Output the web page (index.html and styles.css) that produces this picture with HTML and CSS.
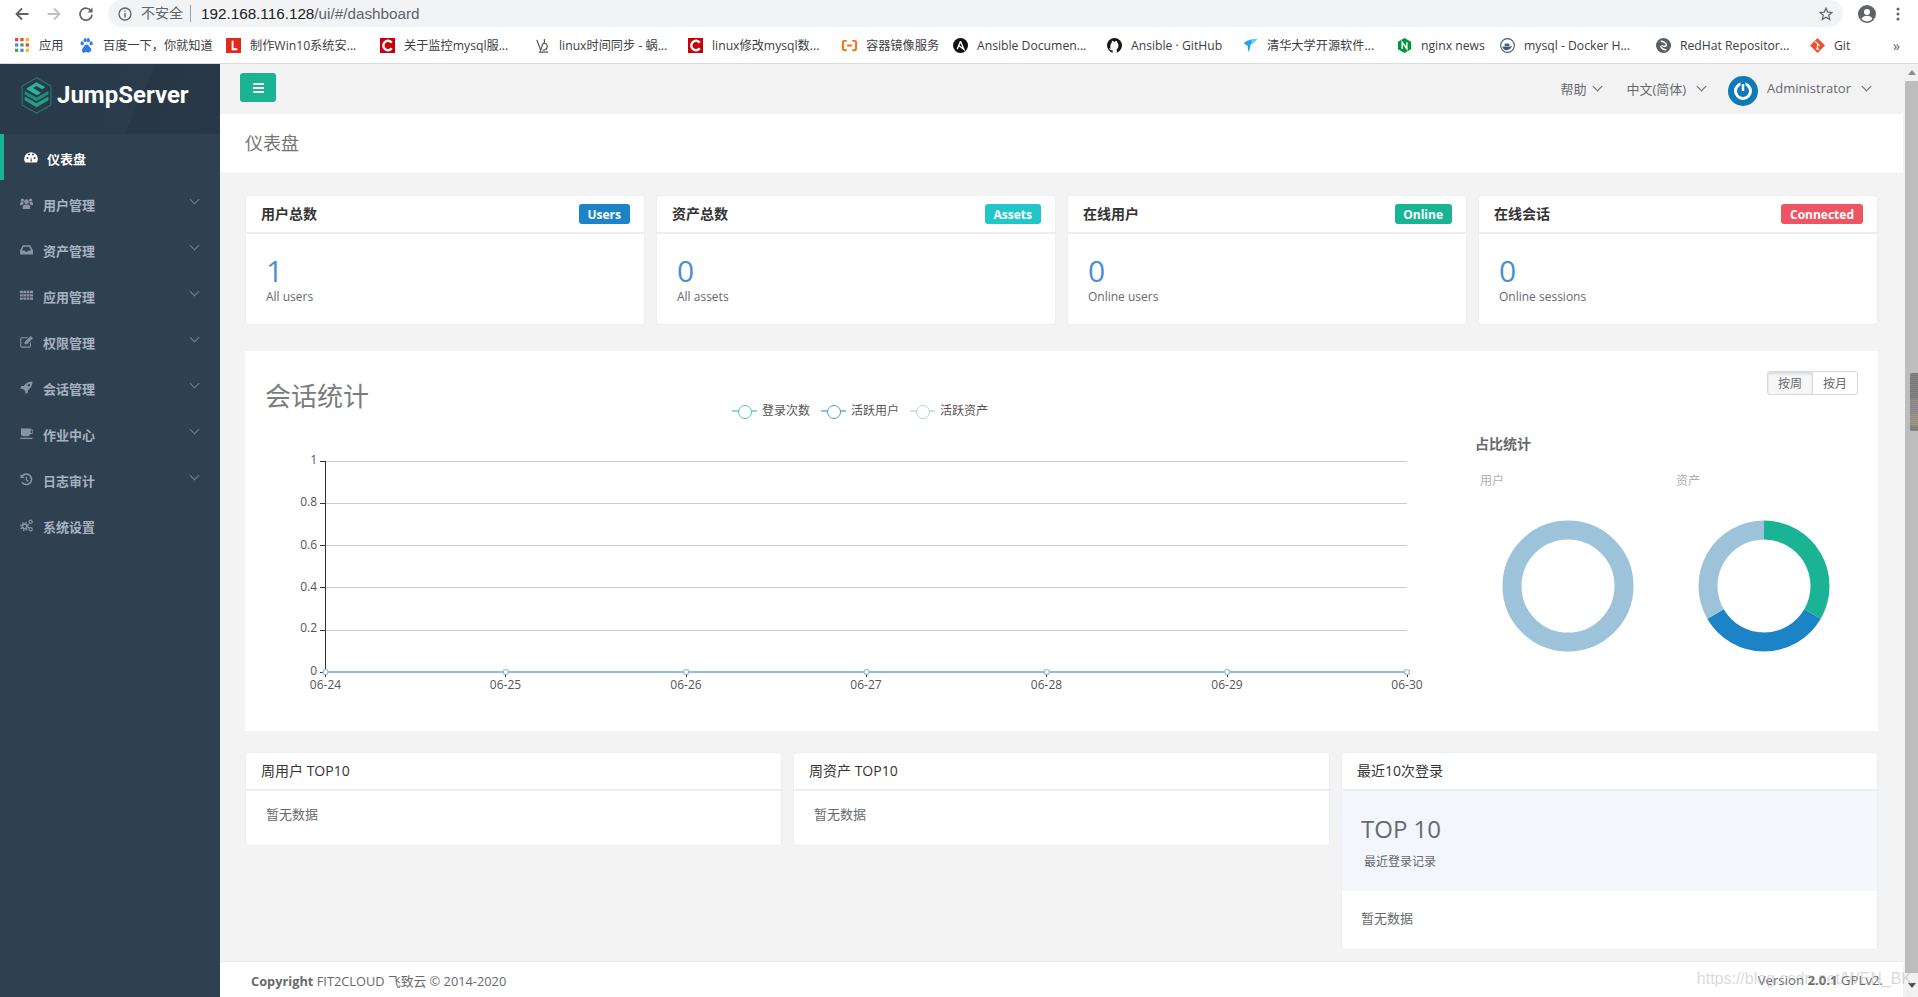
FILE: index.html
```html
<!DOCTYPE html>
<html>
<head>
    <title>JumpServer</title>
    <link rel="stylesheet" href="styles.css">
</head>
<body>
    <div class="browser-bar">
        <svg class="nav-icon" viewBox="0 0 16 16"><path d="M14.5 8H2.5M8 2.5L2.5 8 8 13.5" fill="none" stroke="#5f6368" stroke-width="1.8"/></svg>
        <svg class="nav-icon" viewBox="0 0 16 16"><path d="M1.5 8h12M8 2.5L13.5 8 8 13.5" fill="none" stroke="#bdc1c6" stroke-width="1.8"/></svg>
        <svg class="nav-icon" viewBox="0 0 16 16"><path d="M13.2 5.2A6 6 0 1 0 14 8.6" fill="none" stroke="#5f6368" stroke-width="1.7"/><path d="M14.5 1.5v5h-5z" fill="#5f6368"/></svg>
        <div class="address">
            <svg class="info-icon" viewBox="0 0 14 14"><circle cx="7" cy="7" r="6" fill="none" stroke="#5f6368" stroke-width="1.3"/><path d="M6.3 6h1.4v4.5H6.3zM6.3 3.4h1.4v1.4H6.3z" fill="#5f6368"/></svg>
            <span class="insecure">不安全</span>
            <span class="url"><b>192.168.116.128</b>/ui/#/dashboard</span>
            <svg class="star-icon" viewBox="0 0 14 14"><path d="M7 1.2l1.7 3.9 4.2.4-3.2 2.8 1 4.1L7 10.2l-3.7 2.2 1-4.1L1.1 5.500l4.2-.4z" fill="none" stroke="#5f6368" stroke-width="1.2"/></svg>
        </div>
        <svg class="account-icon" viewBox="0 0 18 18"><circle cx="9" cy="9" r="9" fill="#5f6368"/><circle cx="9" cy="7" r="3" fill="#fff"/><path d="M3.500 14c1-2.500 3-3.200 5.500-3.200s4.500.7 5.500 3.200A7.500 7.500 0 0 1 9 16.500 7.500 7.500 0 0 1 3.500 14z" fill="#fff"/></svg>
        <svg class="menu-icon" viewBox="0 0 4 16"><circle cx="2" cy="3" r="1.500"/><circle cx="2" cy="8" r="1.500"/><circle cx="2" cy="13" r="1.500"/></svg>
    </div>

    <div class="bookmarks">
        <a class="bm"><svg viewBox="0 0 14 14"><path fill="#ea4335" d="M0 0h3v3H0z"/><path fill="#ea4335" d="M5 0h3v3H5z"/><path fill="#fbbc04" d="M10 0h3v3h-3z"/><path fill="#4285f4" d="M0 5h3v3H0z"/><path fill="#34a853" d="M5 5h3v3H5z"/><path fill="#ea4335" d="M10 5h3v3h-3z"/><path fill="#34a853" d="M0 10h3v3H0z"/><path fill="#4285f4" d="M5 10h3v3H5z"/><path fill="#fbbc04" d="M10 10h3v3h-3z"/></svg>应用</a>
        <a class="bm"><svg viewBox="0 0 14 14" fill="#3079e8"><ellipse cx="3" cy="5" rx="1.500" ry="2"/><ellipse cx="5.700" cy="2" rx="1.400" ry="2"/><ellipse cx="8.700" cy="2" rx="1.400" ry="2"/><ellipse cx="11.300" cy="5" rx="1.500" ry="2"/><path d="M7 6c2 0 2.500 2 4 3.500S10.500 14 8.500 13.500 6 13 4.500 13.800 2.200 11 3.500 9.500 5 6 7 6z"/></svg>百度一下，你就知道</a>
        <a class="bm"><svg viewBox="0 0 16 16"><rect width="16" height="16" fill="#e02a20"/><path d="M6 3h2v8h4v2H6z" fill="#fff"/></svg>制作Win10系统安...</a>
        <a class="bm"><svg viewBox="0 0 16 16"><rect width="16" height="16" fill="#c8000b"/><path d="M12.500 5A5 5 0 1 0 12.500 11" fill="none" stroke="#fff" stroke-width="2.600"/></svg>关于监控mysql服...</a>
        <a class="bm"><svg viewBox="0 0 16 16"><path d="M2 2l4 11 2.500-7a3 3 0 0 1 4.500 3c0 3-3 4-5 4M10 1v4M4 15h10" fill="none" stroke="#555" stroke-width="1.300"/></svg>linux时间同步 - 蜗...</a>
        <a class="bm"><svg viewBox="0 0 16 16"><rect width="16" height="16" fill="#c8000b"/><path d="M12.500 5A5 5 0 1 0 12.500 11" fill="none" stroke="#fff" stroke-width="2.600"/></svg>linux修改mysql数...</a>
        <a class="bm"><svg viewBox="0 0 16 16"><path d="M5 3H2.500A1.500 1.500 0 0 0 1 4.500v7A1.500 1.500 0 0 0 2.500 13H5M11 3h2.500A1.500 1.500 0 0 1 15 4.500v7a1.500 1.500 0 0 1-1.500 1.500H11M5.500 8h5" fill="none" stroke="#ff6a00" stroke-width="2"/></svg>容器镜像服务</a>
        <a class="bm"><svg viewBox="0 0 16 16"><circle cx="8" cy="8" r="8" fill="#111"/><path d="M8 3.500L4.500 12M8 3.500L11.500 12 6 8" fill="none" stroke="#fff" stroke-width="1.500"/></svg>Ansible Documen...</a>
        <a class="bm"><svg viewBox="0 0 16 16"><circle cx="8" cy="8" r="8" fill="#161614"/><path d="M6 16v-3c-3 .5-3.500-1-4-2 1 0 1.500 1 2.200 1.200C3.500 11 3 6.500 5 5c0-1 .2-1.500.5-2 1 .1 1.500.5 2 1h1c.5-.5 1-.9 2-1 .3.5.5 1 .5 2 2 1.500 1.500 6-1 7.500.4.400.5 1 .5 1.500v2z" fill="#fff"/></svg>Ansible · GitHub</a>
        <a class="bm"><svg viewBox="0 0 16 16"><path d="M1 5c4-3 9-4 14-4-2 3-5 5-7 6 0 3-1 5-2 8-1-3-1-5-1-7-1 0-3-1-4-3z" fill="#23a4f0"/><path d="M9 2c2-.5 4-1 6-1-2 3-4 4-6 5z" fill="#54dfe8"/></svg>清华大学开源软件...</a>
        <a class="bm"><svg viewBox="0 0 16 16"><path d="M8 0l7 4v8l-7 4-7-4V4z" fill="#009639"/><path d="M5.500 11.500v-7l5 7v-7" fill="none" stroke="#fff" stroke-width="1.600"/></svg>nginx news</a>
        <a class="bm"><svg viewBox="0 0 16 16"><circle cx="8" cy="8" r="7.300" fill="#fff" stroke="#3f5b73" stroke-width="1.200"/><path d="M2.500 9h9c1 0 2-1 2-2-1 4-4 6-6.500 6s-4-1.500-4.500-4z" fill="#3f5b73"/><path d="M5 6h5v2.500H5z" fill="#3f5b73"/></svg>mysql - Docker H...</a>
        <a class="bm"><svg viewBox="0 0 16 16"><circle cx="8" cy="8" r="8" fill="#5a5f66"/><path d="M5 3.500c3 0 6 2 6 4S7 9 6 7.500M11 12.500c-3 0-6-2-6-4" fill="none" stroke="#fff" stroke-width="1.500"/></svg>RedHat Repositor...</a>
        <a class="bm"><svg viewBox="0 0 16 16"><path d="M8 0l8 8-8 8-8-8z" fill="#f05133"/><path d="M5.500 3.500l5 5M8 6v6" fill="none" stroke="#fff" stroke-width="1.200"/><circle cx="8" cy="11.500" r="1.300" fill="#fff"/></svg>Git</a>
        <span class="bm-more">»</span>
    </div>

    <div class="app">
        <aside class="sidebar">
            <div class="logo">
                <svg class="logo-mark" viewBox="0 0 30 36">
                    <path d="M15 .7l14 8.100v18.400l-14 8.100-14-8.100V8.800z" fill="none" stroke="#23806f" stroke-width="1"/>
                    <path d="M3.500 19l11.500 6.500L26.500 19v3.500L15 29.500 3.500 22.500z" fill="#21a184"/>
                    <path d="M3.500 13.500L15 20l11.500-6.500V17L15 23.500 3.500 17z" fill="#1f8f78"/>
                    <path d="M5.500 11L15 5l8.500 5-3 1.800L15 8.800l-3.500 2 8 4.500-4 2.500-10-6z" fill="#2bb596"/>
                </svg>
                <span class="logo-text">JumpServer</span>
            </div>
            <nav>
                <a class="nav-item active">
                    <svg viewBox="0 0 14 14"><path d="M1.200 12.500A6.800 6.800 0 1 1 12.800 12.500z" fill="#fff"/><circle cx="3.500" cy="8" r="1" fill="#2f4050"/><circle cx="5" cy="4.500" r="1" fill="#2f4050"/><circle cx="9" cy="4.500" r="1" fill="#2f4050"/><circle cx="10.500" cy="8" r="1" fill="#2f4050"/><path d="M6.500 11.500l.5-5 1 5z" fill="#2f4050"/></svg>
                    <span>仪表盘</span>
                </a>
                <a class="nav-item">
                    <svg viewBox="0 0 14 14"><circle cx="7" cy="5" r="2.600"/><path d="M3 13v-3a3 3 0 0 1 3-2h2a3 3 0 0 1 3 2v3z"/><circle cx="2.600" cy="3.400" r="1.700"/><circle cx="11.400" cy="3.400" r="1.700"/><path d="M0 9V7a2 2 0 0 1 2-1.500h1.500A4 4 0 0 0 4 7.600 4 4 0 0 0 2 9zM14 9V7a2 2 0 0 0-2-1.500h-1.500a4 4 0 0 1-.5 2.100A4 4 0 0 1 12 9z"/></svg>
                    <span>用户管理</span><i class="chevron"></i>
                </a>
                <a class="nav-item">
                    <svg viewBox="0 0 14 14"><path fill-rule="evenodd" d="M3 2.500h8l3 5.500v3.500a1 1 0 0 1-1 1H1a1 1 0 0 1-1-1V8zM4 4L2 8h3l1 1.500h2L9 8h3l-2-4z"/></svg>
                    <span>资产管理</span><i class="chevron"></i>
                </a>
                <a class="nav-item">
                    <svg viewBox="0 0 14 14"><path d="M0 2h3v2.500H0zM3.600 2h3v2.500h-3zM7.200 2h3v2.500h-3zM10.800 2H14v2.500h-3.200zM0 5.600h3v2.500H0zM3.600 5.600h3v2.500h-3zM7.200 5.600h3v2.500h-3zM10.800 5.600H14v2.500h-3.200zM0 9.200h3v2.500H0zM3.600 9.200h3v2.500h-3zM7.200 9.200h3v2.500h-3zM10.800 9.200H14v2.500h-3.200z"/></svg>
                    <span>应用管理</span><i class="chevron"></i>
                </a>
                <a class="nav-item">
                    <svg viewBox="0 0 14 14"><path d="M8.500 3H2a1.200 1.200 0 0 0-1.200 1.200v7.600A1.200 1.200 0 0 0 2 13h8a1.200 1.200 0 0 0 1.200-1.200V8" fill="none" stroke="currentColor" stroke-width="1.200"/><path d="M5 7.500L11.500 1 14 3.500 7.500 10H5z"/></svg>
                    <span>权限管理</span><i class="chevron"></i>
                </a>
                <a class="nav-item">
                    <svg viewBox="0 0 14 14"><path fill-rule="evenodd" d="M13.500.5C9 .5 6 2.500 4 5.500H1.500L0 8l3.200.5 2.300 2.300L6 14l2.500-1.500V10C11.500 8 13.500 5 13.500.5zM9.500 3.200a1.300 1.300 0 1 0 .01 0z"/></svg>
                    <span>会话管理</span><i class="chevron"></i>
                </a>
                <a class="nav-item">
                    <svg viewBox="0 0 14 14"><path d="M1 1.500h10.500v1H12a2 2 0 0 1 0 5h-1A3 3 0 0 1 8 10H4a3 3 0 0 1-3-3zM11.500 3.500v3H12a1.500 1.500 0 0 0 0-3zM0 11.500h13.500V13H1.500A1.500 1.500 0 0 1 0 11.500z"/></svg>
                    <span>作业中心</span><i class="chevron"></i>
                </a>
                <a class="nav-item">
                    <svg viewBox="0 0 14 14"><path d="M2.500 3.200A5.600 5.600 0 1 1 2.200 10" fill="none" stroke="currentColor" stroke-width="1.800"/><path d="M.5 1v4.500H5zM6.200 4h1.400v3.200l1.800 1.400-.8 1-2.400-1.800z"/></svg>
                    <span>日志审计</span><i class="chevron"></i>
                </a>
                <a class="nav-item">
                    <svg viewBox="0 0 14 14" fill="none" stroke="currentColor"><circle cx="5" cy="8" r="2.500" stroke-width="1.800"/><circle cx="5" cy="8" r="4.200" stroke-width="1.400" stroke-dasharray="1.700 1.600"/><circle cx="11.500" cy="3" r="1.700" stroke-width="1.300"/><circle cx="11.500" cy="11" r="1.700" stroke-width="1.300"/></svg>
                    <span>系统设置</span>
                </a>
            </nav>
        </aside>

        <div class="content">
            <header class="topbar">
                <button class="toggle"><i></i><i></i><i></i></button>
                <div class="top-links">
                    <a class="top-link help">帮助<i class="chevron"></i></a>
                    <a class="top-link lang">中文(简体)<i class="chevron"></i></a>
                    <svg class="avatar" viewBox="0 0 30 30"><circle cx="15" cy="15" r="15" fill="#0f7ab8"/><circle cx="15" cy="15" r="7.500" fill="none" stroke="#fff" stroke-width="3"/><path d="M15 6v9" stroke="#0f7ab8" stroke-width="5"/><path d="M15 8v7" stroke="#fff" stroke-width="2.500"/></svg>
                    <a class="top-link user">Administrator<i class="chevron"></i></a>
                </div>
            </header>

            <div class="page-title">仪表盘</div>

            <main class="wrapper">
                <section class="stat-row">
                    <div class="card stat">
                        <div class="card-title"><h5>用户总数</h5><span class="label blue">Users</span></div>
                        <div class="stat-body"><div class="num">1</div><small>All users</small></div>
                    </div>
                    <div class="card stat">
                        <div class="card-title"><h5>资产总数</h5><span class="label cyan">Assets</span></div>
                        <div class="stat-body"><div class="num">0</div><small>All assets</small></div>
                    </div>
                    <div class="card stat">
                        <div class="card-title"><h5>在线用户</h5><span class="label green">Online</span></div>
                        <div class="stat-body"><div class="num">0</div><small>Online users</small></div>
                    </div>
                    <div class="card stat">
                        <div class="card-title"><h5>在线会话</h5><span class="label red">Connected</span></div>
                        <div class="stat-body"><div class="num">0</div><small>Online sessions</small></div>
                    </div>
                </section>

                <section class="chart-panel">
                    <div class="chart-left">
                        <div class="chart-head">
                            <h2>会话统计</h2>
                            <ul class="legend">
                                <li class="lg-green"><i></i>登录次数</li>
                                <li class="lg-blue"><i></i>活跃用户</li>
                                <li class="lg-pale"><i></i>活跃资产</li>
                            </ul>
                        </div>
                        <svg class="line-chart" viewBox="245 441 1205 270">
                            <g class="grid">
                                <path d="M325 461.500H1407M325 503.500H1407M325 545.500H1407M325 587.500H1407M325 630.500H1407"/>
                            </g>
                            <path class="axis" d="M325.500 461V672M320 461.500h5M320 503.500h5M320 545.500h5M320 587.500h5M320 630.500h5M320 672.500h5M325.500 672v5M505.500 672v5M686.500 672v5M866.500 672v5M1046.500 672v5M1227.500 672v5M1407.500 672v5"/>
                            <g class="y-labels">
                                <text x="317" y="464">1</text>
                                <text x="317" y="506">0.8</text>
                                <text x="317" y="549">0.6</text>
                                <text x="317" y="591">0.4</text>
                                <text x="317" y="632">0.2</text>
                                <text x="317" y="675">0</text>
                            </g>
                            <g class="x-labels">
                                <text x="325.500" y="689">06-24</text>
                                <text x="505.500" y="689">06-25</text>
                                <text x="686" y="689">06-26</text>
                                <text x="866" y="689">06-27</text>
                                <text x="1046.500" y="689">06-28</text>
                                <text x="1227" y="689">06-29</text>
                                <text x="1407" y="689">06-30</text>
                            </g>
                            <path class="series" d="M325.500 672H1407"/>
                            <g class="dots">
                                <circle cx="325.500" cy="672" r="2.500"/><circle cx="505.800" cy="672" r="2.500"/><circle cx="686.200" cy="672" r="2.500"/><circle cx="866.500" cy="672" r="2.500"/><circle cx="1046.800" cy="672" r="2.500"/><circle cx="1227.200" cy="672" r="2.500"/><circle cx="1407" cy="672" r="2.500"/>
                            </g>
                        </svg>
                    </div>
                    <div class="chart-right">
                        <div class="btn-group"><button class="on">按周</button><button>按月</button></div>
                        <h3>占比统计</h3>
                        <div class="donuts">
                            <div class="donut">
                                <span>用户</span>
                                <svg viewBox="0 0 160 160"><circle cx="80" cy="80" r="56" fill="none" stroke="#9cc3da" stroke-width="19"/></svg>
                            </div>
                            <div class="donut">
                                <span>资产</span>
                                <svg viewBox="0 0 160 160" fill="none" stroke-width="19">
                                    <path d="M80 24A56 56 0 0 1 128.500 108" stroke="#1ab394"/>
                                    <path d="M128.500 108A56 56 0 0 1 31.500 108" stroke="#1c84c6"/>
                                    <path d="M31.500 108A56 56 0 0 1 80 24" stroke="#9cc3da"/>
                                </svg>
                            </div>
                        </div>
                    </div>
                </section>

                <section class="bottom-row">
                    <div class="card">
                        <div class="card-title plain"><h5>周用户 TOP10</h5></div>
                        <div class="empty">暂无数据</div>
                    </div>
                    <div class="card">
                        <div class="card-title plain"><h5>周资产 TOP10</h5></div>
                        <div class="empty">暂无数据</div>
                    </div>
                    <div class="card">
                        <div class="card-title plain"><h5>最近10次登录</h5></div>
                        <div class="top-ten">
                            <h4>TOP 10</h4>
                            <small>最近登录记录</small>
                        </div>
                        <div class="empty last">暂无数据</div>
                    </div>
                </section>
            </main>

            <footer class="footer">
                <div><strong>Copyright</strong> FIT2CLOUD 飞致云 © 2014-2020</div>
                <div class="version">Version <strong>2.0.1</strong> GPLv2.</div>
                <span class="watermark">https://blog.csdn.net/WEN_BK</span>
            </footer>
        </div>

        <div class="scrollbar">
            <div class="scroll-btn"><i class="up"></i></div>
            <div class="scroll-track"><div class="scroll-thumb"></div></div>
            <div class="scroll-btn end"><i class="down"></i></div>
        </div>
    </div>
</body>
</html>
```

FILE: styles.css
```css
* {
    box-sizing: border-box;
}

html, body {
    height: 100%;
}

body {
    margin: 0;
    overflow: hidden;
    font-family: "Open Sans", "Noto Sans CJK SC", sans-serif;
    font-size: 13px;
    color: #676a6c;
    background-color: #fff;
}

h2, h3, h4, h5, ul {
    margin: 0;
    padding: 0;
    font-weight: normal;
}

/* browser chrome */
.browser-bar {
    height: 27px;
    display: flex;
    align-items: center;
    padding-left: 14px;
}

.nav-icon {
    width: 16px;
    height: 16px;
    margin-right: 16px;
}

.address {
    height: 27px;
    flex: 1;
    margin-left: -2px;
    margin-right: 15px;
    display: flex;
    align-items: center;
    padding: 0 10px;
    background-color: #f1f3f4;
    border-radius: 14px;
    font-family: "Liberation Sans", "Noto Sans CJK SC", sans-serif;
}

.info-icon {
    width: 14px;
    height: 14px;
}

.insecure {
    font-size: 14px;
    color: #5f6368;
    margin-left: 9px;
    padding-right: 7px;
    border-right: 1px solid #9aa0a6;
    line-height: 17px;
}

.url {
    margin-left: 10px;
    font-size: 15.25px;
    color: #5f6368;
    flex: 1;
}

.url b {
    font-weight: normal;
    color: #202124;
}

.star-icon {
    width: 14px;
    height: 14px;
}

.account-icon {
    width: 18px;
    height: 18px;
    margin-right: 20px;
}

.menu-icon {
    width: 4px;
    height: 16px;
    margin-right: 18px;
    fill: #5f6368;
}

.bookmarks {
    height: 37px;
    display: grid;
    grid-template-columns: 64px 147px 154px 155px 153px 154px 111px 154px 136px 154px 103px 156px 154px 83px 1fr;
    align-items: center;
    padding-left: 15px;
    border-bottom: 1px solid #dadce0;
    font-size: 12.2px;
    color: #3c4043;
    white-space: nowrap;
}

.bm {
    display: flex;
    align-items: center;
    gap: 9px;
    overflow: hidden;
}

.bm svg {
    width: 15px;
    height: 15px;
    flex: none;
}

.bm-more {
    font-size: 14px;
    color: #5f6368;
}

/* app frame */
.app {
    height: 933px;
    display: flex;
}

.sidebar {
    width: 220px;
    flex: none;
    background-color: #2f4050;
    color: #a7b1c2;
}

.logo {
    height: 70px;
    display: flex;
    align-items: center;
    padding: 0 0 8px 21px;
    background: linear-gradient(115deg, #293a4a 0%, #2a3b4b 62%, #273746 62%, #283847 100%);
}

.logo-mark {
    width: 31px;
    height: 37px;
}

.logo-text {
    margin-left: 5px;
    font-family: Roboto, sans-serif;
    font-size: 24px;
    font-weight: 700;
    color: #fff;
}

.nav-item {
    height: 46px;
    display: flex;
    align-items: center;
    padding: 2px 22px 0 20px;
    font-weight: 700;
    color: #a7b1c2;
}

.nav-item svg {
    width: 13px;
    height: 13px;
    margin: -2px 10px 0 0;
    fill: #8a94a0;
    color: #8a94a0;
    flex: none;
}

.nav-item svg[fill="none"] {
    fill: none;
}

.nav-item .chevron {
    margin: -9px 0 0 auto;
    color: #72808e;
}

.nav-item.active {
    border-left: 4px solid #1ab394;
    color: #fff;
}

.nav-item.active svg {
    width: 14px;
    height: 14px;
    margin-right: 9px;
}

.chevron {
    display: inline-block;
    width: 7px;
    height: 7px;
    border-right: 1px solid currentColor;
    border-bottom: 1px solid currentColor;
    transform: rotate(45deg);
}

.content {
    flex: 1;
    display: flex;
    flex-direction: column;
    background-color: #f3f3f4;
    padding-right: 2px;
    min-width: 0;
}

.topbar {
    height: 50px;
    flex: none;
    display: flex;
    align-items: center;
    justify-content: space-between;
    padding: 0 33px 0 20px;
}

.toggle {
    width: 36px;
    height: 29px;
    margin-bottom: 3px;
    padding: 0;
    display: flex;
    flex-direction: column;
    align-items: center;
    justify-content: center;
    gap: 2px;
    background-color: #1ab394;
    border: none;
    border-radius: 3px;
}

.toggle i {
    width: 11px;
    height: 2px;
    background-color: #fff;
}

.top-links {
    display: flex;
    align-items: center;
    font-size: 13px;
}

.top-link {
    display: flex;
    align-items: center;
    color: #676a6c;
    margin-bottom: 2px;
}

.top-link .chevron {
    margin: -4px 0 0 12px;
}

.help {
    margin-right: 25px;
}

.help .chevron {
    margin-left: 8px;
}

.lang {
    margin-right: 23px;
}

.user {
    margin-left: 9px;
}

.avatar {
    width: 30px;
    height: 30px;
    margin-top: 4px;
}

.page-title {
    height: 60px;
    flex: none;
    padding: 0 25px 4px;
    display: flex;
    align-items: center;
    background-color: #fff;
    font-size: 18px;
    color: #777;
    border-bottom: 1px solid #eee;
}

.wrapper {
    flex: 1;
    padding: 21px 25px 0;
    min-height: 0;
}

/* cards */
.stat-row {
    display: grid;
    grid-template-columns: repeat(4, 400px);
    gap: 11px;
}

.card {
    background-color: #fff;
    border: 1px solid #eceef3;
    border-radius: 4px;
    align-self: start;
}

.stat {
    height: 130px;
}

.card-title {
    height: 38px;
    display: flex;
    align-items: center;
    justify-content: space-between;
    padding: 0 14.5px 2px 15px;
    border-bottom: 2px solid #eceef3;
}

.card-title h5 {
    font-size: 14px;
    font-weight: 700;
    color: #333;
}

.card-title.plain h5 {
    font-weight: normal;
}

.label {
    height: 20px;
    margin-top: 2px;
    padding: 0 8.5px;
    display: flex;
    align-items: center;
    font-size: 12px;
    font-weight: 700;
    color: #fff;
    border-radius: 3px;
}

.blue { background-color: #1c84c6; }
.cyan { background-color: #23c6c8; }
.green { background-color: #1ab394; }
.red { background-color: #ed5565; }

.stat-body {
    padding: 19px 20px 0;
}

.num {
    font-size: 30px;
    line-height: 36px;
    color: #4a8fd3;
}

.stat-body small {
    display: block;
    font-size: 12px;
    line-height: 16px;
}

/* session chart */
.chart-panel {
    height: 380px;
    margin-top: 26px;
    display: flex;
    background-color: #fff;
}

.chart-left {
    width: 1205px;
    flex: none;
}

.chart-head {
    height: 90px;
    display: flex;
    padding: 29px 0 0 20px;
}

.chart-head h2 {
    font-size: 26px;
    line-height: 32px;
    color: #7a7c7e;
}

.legend {
    list-style: none;
    display: flex;
    gap: 11px;
    margin: 22px 0 0 363px;
    font-size: 12px;
    line-height: 18px;
    color: #555;
}

.legend li {
    display: flex;
    align-items: center;
    gap: 5px;
    height: 18px;
}

.legend i {
    position: relative;
    width: 25px;
    height: 2px;
}

.legend i::after {
    content: "";
    position: absolute;
    left: 6px;
    top: -5px;
    width: 12px;
    height: 12px;
    border-radius: 50%;
    background-color: #fff;
    border: 1.5px solid;
}

.lg-green i { background-color: #8fdccc; }
.lg-green i::after { border-color: #52c7b0; }
.lg-blue i { background-color: #8fc1e2; }
.lg-blue i::after { border-color: #4a9ad4; }
.lg-pale i { background-color: #d2e3ee; }
.lg-pale i::after { border-color: #b5d2e3; }

.line-chart {
    display: block;
    width: 1205px;
    height: 270px;
    font-size: 12px;
}

.grid path {
    fill: none;
    stroke: #ccc;
}

.axis {
    fill: none;
    stroke: #333;
}

.y-labels text {
    fill: #555;
    text-anchor: end;
}

.x-labels text {
    fill: #555;
    text-anchor: middle;
}

.series {
    fill: none;
    stroke: #8fbcd8;
    stroke-width: 2;
}

.dots circle {
    fill: #fff;
    stroke: #8fbcd8;
    stroke-width: 1.2;
}

.chart-right {
    flex: 1;
    padding: 20px 20px 0 20px;
}

.btn-group {
    display: flex;
    justify-content: flex-end;
    margin-right: 4px;
}

.btn-group button {
    width: 45px;
    height: 24px;
    padding: 0;
    font: inherit;
    font-size: 12px;
    color: #676a6c;
    background-color: #fff;
    border: 1px solid #d9d9de;
    border-left: none;
    border-radius: 0 3px 3px 0;
}

.btn-group .on {
    width: 46px;
    border-left: 1px solid #d9d9de;
    border-radius: 3px 0 0 3px;
    background-color: #f7f7f7;
    box-shadow: inset 0 2px 3px rgba(0, 0, 0, 0.12);
}

.chart-right h3 {
    margin: 39px 0 0 5px;
    font-size: 14px;
    line-height: 20px;
    font-weight: 700;
    color: #676a6c;
}

.donuts {
    display: flex;
    margin-top: 19px;
}

.donut {
    width: 196px;
}

.donut span {
    display: block;
    margin-left: 10px;
    font-size: 12px;
    line-height: 16px;
    color: #b0b0b0;
}

.donut svg {
    display: block;
    width: 160px;
    height: 160px;
    margin: 17px 0 0 18px;
}

/* top lists */
.bottom-row {
    margin-top: 21px;
    display: grid;
    grid-template-columns: repeat(3, 537px);
    gap: 11px;
}

.empty {
    height: 54px;
    padding: 13px 20px 0;
}

.empty.last {
    height: 58px;
    padding: 17px 19px 0;
}

.top-ten {
    height: 100px;
    padding: 23px 19px 0;
    background-color: #f3f6fb;
}

.top-ten h4 {
    font-size: 24px;
    line-height: 30px;
    color: #676a6c;
}

.top-ten small {
    display: block;
    margin: 10px 0 0 3px;
    font-size: 12px;
    line-height: 16px;
}

/* footer */
.footer {
    position: relative;
    height: 36px;
    flex: none;
    display: flex;
    align-items: center;
    justify-content: space-between;
    padding: 1px 20px 0 31px;
    background-color: #fff;
    border-top: 1px solid #e7eaec;
    font-size: 12.8px;
}

.version {
    font-size: 13.2px;
}

.watermark {
    position: absolute;
    right: -9px;
    top: 8px;
    font-family: "Liberation Sans", sans-serif;
    font-size: 16px;
    color: rgba(170, 170, 170, 0.45);
}

/* scrollbar */
.scrollbar {
    width: 13px;
    flex: none;
    display: flex;
    flex-direction: column;
    background-color: #f1f1f1;
}

.scroll-btn {
    height: 17px;
    display: flex;
    align-items: center;
    justify-content: center;
}

.scroll-btn.end {
    height: 24px;
}

.up {
    border: 4px solid transparent;
    border-top: none;
    border-bottom: 5px solid #8a8a8a;
}

.down {
    border: 4px solid transparent;
    border-bottom: none;
    border-top: 5px solid #505050;
}

.scroll-track {
    flex: 1;
    background-color: #bdbdbd;
    padding: 292px 0 0 5px;
}

.scroll-thumb {
    height: 58px;
    border-radius: 2px 0 0 2px;
    background: repeating-linear-gradient(transparent 0 1px, rgba(255, 255, 255, 0.12) 1px 2px), linear-gradient(#767676 0 45%, #8a8088 45% 70%, #8e8c78 70% 92%, #767676 92%);
}
```
